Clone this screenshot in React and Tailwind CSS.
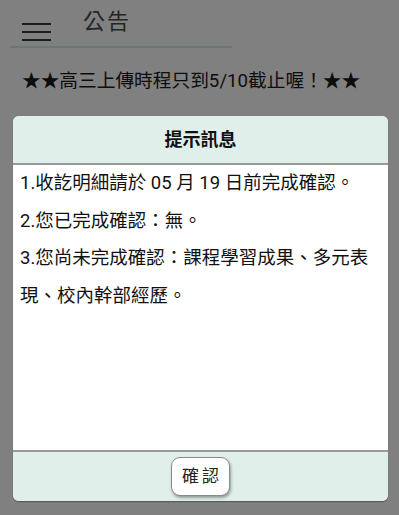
import React from 'react';

const font = { fontFamily: '"Roboto", "Noto Sans CJK TC", sans-serif' };

const lines = [
    '1.收訖明細請於 05 月 19 日前完成確認。',
    '2.您已完成確認：無。',
    '3.您尚未完成確認：課程學習成果、多元表現、校內幹部經歷。',
];

const App = () => {
    return (
        <div className="w-[399px] h-[515px] bg-[#808080] overflow-hidden" style={font}>
            <div className="flex items-end h-[48px] w-[222px] ml-[10px] border-b-2 border-[#68796f]">
                <div className="flex flex-col gap-[6px] ml-[12px] mb-[5px]">
                    <span className="block w-[29px] h-[2px] bg-[#1c1c1c]"></span>
                    <span className="block w-[29px] h-[2px] bg-[#1c1c1c]"></span>
                    <span className="block w-[29px] h-[2px] bg-[#1c1c1c]"></span>
                </div>
                <h1 className="ml-[32px] mb-[13px] text-[22px] leading-none text-[#262626] tracking-[2px]">公告</h1>
            </div>

            <p className="mt-[20px] ml-[22px] text-[18.7px] leading-[26px] text-[#0d0d0d]">
                ★★高三上傳時程只到5/10截止喔！★★
            </p>

            <div className="mt-[22px] mx-[13px] w-[375px] rounded-[6px] overflow-hidden bg-white shadow-[0_1px_1px_rgba(0,0,0,0.35)]">
                <div className="h-[49px] flex items-center justify-center bg-[#e0efe9] border-b-2 border-[#9a9a9a]">
                    <span className="text-[18px] font-bold text-[#111]">提示訊息</span>
                </div>
                <div className="h-[285px] px-[7px] text-[18.5px] leading-[37.5px] text-[#111]">
                    {lines.map((line) => (
                        <p key={line}>{line}</p>
                    ))}
                </div>
                <div className="h-[51px] flex items-center justify-center bg-[#e0efe9] border-t-2 border-[#9a9a9a]">
                    <button className="w-[59px] h-[39px] bg-white rounded-[9px] border border-[#8a8a8a] shadow-[1px_2px_3px_rgba(0,0,0,0.35)] text-[17px] tracking-[3px] pl-[3px] text-[#222]">
                        確認
                    </button>
                </div>
            </div>
        </div>
    );
};

export default App;
